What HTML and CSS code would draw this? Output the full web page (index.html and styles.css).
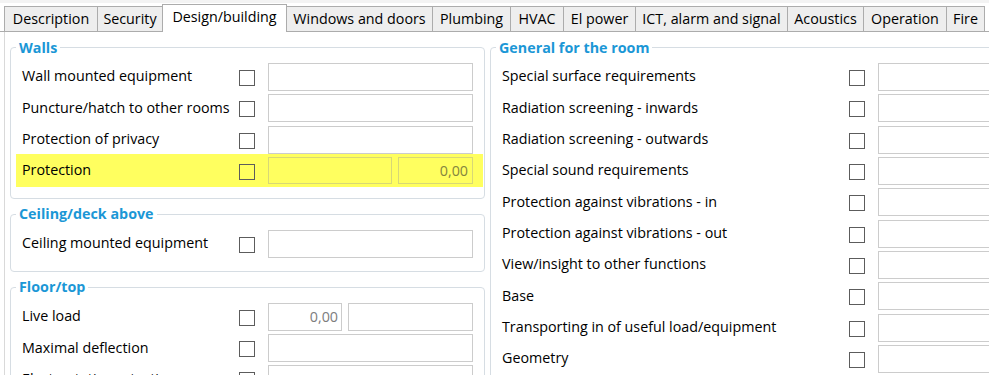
FILE: index.html
```html
<!DOCTYPE html>
<html>
<head>
<meta charset="utf-8">
<link rel="stylesheet" href="styles.css">
</head>
<body>
<div class="window">
  <div class="tabbar">
    <div class="tab t-desc">Description</div>
    <div class="tab t-sec">Security</div>
    <div class="tab active t-design">Design/building</div>
    <div class="tab t-win">Windows and doors</div>
    <div class="tab t-plumb">Plumbing</div>
    <div class="tab t-hvac">HVAC</div>
    <div class="tab t-el">El power</div>
    <div class="tab t-ict">ICT, alarm and signal</div>
    <div class="tab t-acou">Acoustics</div>
    <div class="tab t-oper">Operation</div>
    <div class="tab t-fire">Fire</div>
  </div>
  <div class="panel">
    <div class="col left">
      <fieldset class="group">
        <legend>Walls</legend>
        <div class="row"><span class="lbl">Wall mounted equipment</span><span class="cb"></span><span class="field"><span class="inp"></span></span></div>
        <div class="row"><span class="lbl">Puncture/hatch to other rooms</span><span class="cb"></span><span class="field"><span class="inp"></span></span></div>
        <div class="row"><span class="lbl">Protection of privacy</span><span class="cb"></span><span class="field"><span class="inp"></span></span></div>
        <div class="row hl"><span class="lbl">Protection</span><span class="cb"></span><span class="field dual"><span class="inp wide"></span><span class="inp num">0,00</span></span></div>
      </fieldset>
      <fieldset class="group">
        <legend>Ceiling/deck above</legend>
        <div class="row"><span class="lbl">Ceiling mounted equipment</span><span class="cb"></span><span class="field"><span class="inp"></span></span></div>
      </fieldset>
      <fieldset class="group">
        <legend>Floor/top</legend>
        <div class="row"><span class="lbl">Live load</span><span class="cb"></span><span class="field dual"><span class="inp narrow num">0,00</span><span class="inp"></span></span></div>
        <div class="row"><span class="lbl">Maximal deflection</span><span class="cb"></span><span class="field"><span class="inp"></span></span></div>
        <div class="row"><span class="lbl">Electrostatic protection</span><span class="cb"></span><span class="field"><span class="inp"></span></span></div>
      </fieldset>
    </div>
    <div class="col right">
      <fieldset class="group">
        <legend>General for the room</legend>
        <div class="row"><span class="lbl">Special surface requirements</span><span class="cb"></span><span class="field"><span class="inp"></span></span></div>
        <div class="row"><span class="lbl">Radiation screening - inwards</span><span class="cb"></span><span class="field"><span class="inp"></span></span></div>
        <div class="row"><span class="lbl">Radiation screening - outwards</span><span class="cb"></span><span class="field"><span class="inp"></span></span></div>
        <div class="row"><span class="lbl">Special sound requirements</span><span class="cb"></span><span class="field"><span class="inp"></span></span></div>
        <div class="row"><span class="lbl">Protection against vibrations - in</span><span class="cb"></span><span class="field"><span class="inp"></span></span></div>
        <div class="row"><span class="lbl">Protection against vibrations - out</span><span class="cb"></span><span class="field"><span class="inp"></span></span></div>
        <div class="row"><span class="lbl">View/insight to other functions</span><span class="cb"></span><span class="field"><span class="inp"></span></span></div>
        <div class="row"><span class="lbl">Base</span><span class="cb"></span><span class="field"><span class="inp"></span></span></div>
        <div class="row"><span class="lbl">Transporting in of useful load/equipment</span><span class="cb"></span><span class="field"><span class="inp"></span></span></div>
        <div class="row"><span class="lbl">Geometry</span><span class="cb"></span><span class="field"><span class="inp"></span></span></div>
        <div class="row"><span class="lbl">Other</span><span class="cb"></span><span class="field"><span class="inp"></span></span></div>
      </fieldset>
    </div>
  </div>
</div>
</body>
</html>
```
FILE: styles.css
```css
html, body {
  margin: 0;
  padding: 0;
  overflow: hidden;
  background: #ffffff;
}

.window {
  width: 989px;
  height: 375px;
  overflow: hidden;
  font-family: "Open Sans", "Noto Sans", sans-serif;
  font-size: 14.3px;
  color: #000;
}

.tabbar {
  display: flex;
  align-items: flex-end;
  height: 31px;
  padding-left: 4px;
  border-bottom: 1px solid #acacac;
  background: linear-gradient(to bottom, #f3f3f3 0, #f3f3f3 3px, #ffffff 3px);
}

.tab {
  position: relative;
  flex: none;
  box-sizing: border-box;
  height: 25px;
  padding: 1px 0 0;
  margin-left: -1px;
  border: 1px solid #acacac;
  border-bottom: none;
  background: #eeeeee;
  display: flex;
  align-items: center;
  justify-content: center;
  white-space: nowrap;
  line-height: 1;
}

.tab:first-child {
  margin-left: 0;
}

.tab.active {
  z-index: 1;
  height: 28px;
  margin-bottom: -1px;
  padding: 0 0 2px;
  background: #ffffff;
}

.t-desc { width: 94px; }
.t-sec { width: 66px; }
.t-design { width: 125px; }
.t-win { width: 147px; }
.t-plumb { width: 79px; }
.t-hvac { width: 54px; }
.t-el { width: 73px; }
.t-ict { width: 153px; }
.t-acou { width: 77px; }
.t-oper { width: 84px; }
.t-fire { width: 39px; }

.panel {
  display: flex;
  gap: 5px;
  margin-left: 4px;
  padding: 5.5px 0 0 5px;
  border-left: 1px solid #d9d9d9;
  height: 400px;
}

.col {
  flex: none;
  display: flex;
  flex-direction: column;
}

.left {
  width: 475px;
}

.right {
  width: 620px;
}

.group {
  margin: 0 0 5.5px;
  padding: 3.8px 1px 11.3px 5px;
  border: 1px solid #d6dde3;
  border-radius: 4px;
  min-width: 0;
}

.group legend {
  padding: 0 3px;
  font-weight: bold;
  color: #1b97d6;
  line-height: 20px;
  margin-top: -1px;
}

.row {
  display: grid;
  align-items: center;
  height: 31.33px;
  padding: 0 9px 0 6px;
  column-gap: 12px;
}

.left .row {
  grid-template-columns: 205px 17px 205px;
}

.right .row {
  grid-template-columns: 335px 17px 205px;
}

.row.hl {
  height: 33px;
  margin: -0.83px 0;
  background: #ffff5f;
}

.lbl {
  white-space: nowrap;
  margin-top: -2px;
}

.cb {
  box-sizing: border-box;
  width: 16px;
  height: 16px;
  margin-top: 2px;
  border: 1px solid #5c5c5c;
  background: #fff;
}

.hl .cb {
  background: transparent;
}

.field {
  display: flex;
  gap: 6px;
}

.inp {
  box-sizing: border-box;
  flex: 1;
  height: 28px;
  border: 1px solid #cccccc;
  background: #fff;
}

.inp.wide {
  flex: none;
  width: 124px;
}

.inp.narrow {
  flex: none;
  width: 74px;
}

.num {
  text-align: right;
  padding-right: 3px;
  line-height: 25px;
  color: #7d7d7d;
}

.hl .inp {
  height: 27px;
  background: transparent;
  border-color: #d8d876;
}

.hl .num {
  color: #85853e;
  padding-right: 4px;
}
```
